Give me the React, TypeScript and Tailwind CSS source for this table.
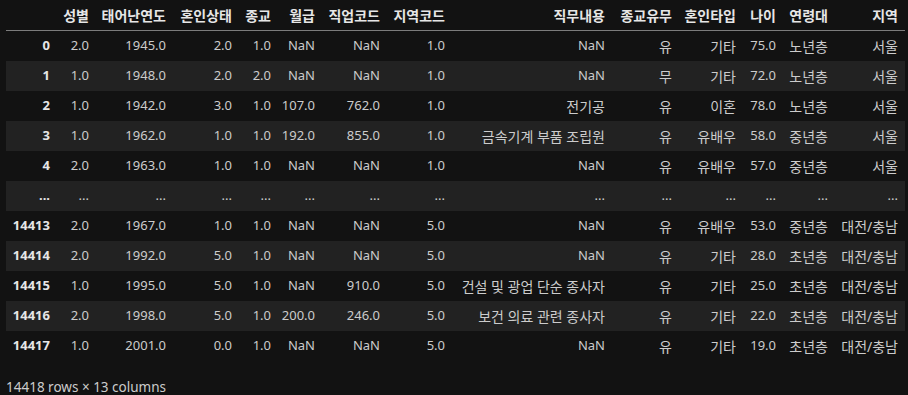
import React from 'react'

const cols = ['', '성별', '태어난연도', '혼인상태', '종교', '월급', '직업코드', '지역코드', '직무내용', '종교유무', '혼인타입', '나이', '연령대', '지역']

const rows: string[][] = [
  ['0', '2.0', '1945.0', '2.0', '1.0', 'NaN', 'NaN', '1.0', 'NaN', '유', '기타', '75.0', '노년층', '서울'],
  ['1', '1.0', '1948.0', '2.0', '2.0', 'NaN', 'NaN', '1.0', 'NaN', '무', '기타', '72.0', '노년층', '서울'],
  ['2', '1.0', '1942.0', '3.0', '1.0', '107.0', '762.0', '1.0', '전기공', '유', '이혼', '78.0', '노년층', '서울'],
  ['3', '1.0', '1962.0', '1.0', '1.0', '192.0', '855.0', '1.0', '금속기계 부품 조립원', '유', '유배우', '58.0', '중년층', '서울'],
  ['4', '2.0', '1963.0', '1.0', '1.0', 'NaN', 'NaN', '1.0', 'NaN', '유', '유배우', '57.0', '중년층', '서울'],
  ['...', '...', '...', '...', '...', '...', '...', '...', '...', '...', '...', '...', '...', '...'],
  ['14413', '2.0', '1967.0', '1.0', '1.0', 'NaN', 'NaN', '5.0', 'NaN', '유', '유배우', '53.0', '중년층', '대전/충남'],
  ['14414', '2.0', '1992.0', '5.0', '1.0', 'NaN', 'NaN', '5.0', 'NaN', '유', '기타', '28.0', '초년층', '대전/충남'],
  ['14415', '1.0', '1995.0', '5.0', '1.0', 'NaN', '910.0', '5.0', '건설 및 광업 단순 종사자', '유', '기타', '25.0', '초년층', '대전/충남'],
  ['14416', '2.0', '1998.0', '5.0', '1.0', '200.0', '246.0', '5.0', '보건 의료 관련 종사자', '유', '기타', '22.0', '초년층', '대전/충남'],
  ['14417', '1.0', '2001.0', '0.0', '1.0', 'NaN', 'NaN', '5.0', 'NaN', '유', '기타', '19.0', '초년층', '대전/충남'],
]

// column template matching pandas' auto widths in the notebook output
const grid = 'grid grid-cols-[51px_39px_77px_66px_39px_44px_65px_65px_160px_67px_64px_40px_52px_70px]'

// hangul renders a bit wider in the original (Malgun Gothic fallback)
const isKo = (s: string) => /[\uac00-\ud7a3]/.test(s)

export default function App() {
  return (
    <div
      className="w-[908px] h-[395px] bg-[#121212] text-[#cccccc] text-[13px] overflow-hidden"
      style={{ fontFamily: '"Noto Sans", "Noto Sans CJK KR", sans-serif' }}
    >
      <div className="pl-[6px] w-[905px]">
        {/* header */}
        <div className={clsx(grid, 'h-[31px] items-center border-b border-[#7c7c7c] font-bold text-[#e6e6e6]')}>
          {cols.map((c, i) => (
            <div key={i} className="text-right pr-[7px] whitespace-nowrap text-[14px]">{c}</div>
          ))}
        </div>

        {/* body */}
        {rows.map((r, ri) => (
          <div
            key={ri}
            className={clsx(grid, 'h-[30px] items-center', ri % 2 === 1 ? 'bg-[#222222]' : 'bg-[#121212]')}
          >
            {r.map((v, ci) => (
              <div
                key={ci}
                className={clsx(
                  'text-right pr-[7px] whitespace-nowrap',
                  isKo(v) && 'text-[14px]',
                  ci === 0 && 'font-bold text-[#e6e6e6]'
                )}
              >
                {v}
              </div>
            ))}
          </div>
        ))}

        <div className="mt-[16px] text-[13.5px] text-[#cccccc]">14418 rows × 13 columns</div>
      </div>
    </div>
  )
}

function clsx(...parts: (string | false | undefined)[]) {
  return parts.filter(Boolean).join(' ')
}
